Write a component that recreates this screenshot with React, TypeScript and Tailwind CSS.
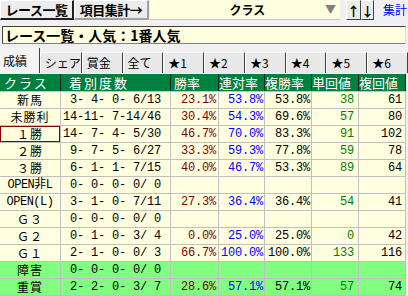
import React from 'react';

type Row = {
  cls: string;
  count: string;
  win: string;
  ren: string;
  fuku: string;
  tan: string;
  fukuRet: string;
  green?: boolean;
  selected?: boolean;
};

const rows: Row[] = [
  { cls: '新馬', count: ' 3- 4- 0- 6/13', win: '23.1%', ren: '53.8%', fuku: '53.8%', tan: '38', fukuRet: '61' },
  { cls: '未勝利', count: '14-11- 7-14/46', win: '30.4%', ren: '54.3%', fuku: '69.6%', tan: '57', fukuRet: '80' },
  { cls: '１勝', count: '14- 7- 4- 5/30', win: '46.7%', ren: '70.0%', fuku: '83.3%', tan: '91', fukuRet: '102', selected: true },
  { cls: '２勝', count: ' 9- 7- 5- 6/27', win: '33.3%', ren: '59.3%', fuku: '77.8%', tan: '59', fukuRet: '78' },
  { cls: '３勝', count: ' 6- 1- 1- 7/15', win: '40.0%', ren: '46.7%', fuku: '53.3%', tan: '89', fukuRet: '64' },
  { cls: 'OPEN非L', count: ' 0- 0- 0- 0/ 0', win: '', ren: '', fuku: '', tan: '', fukuRet: '' },
  { cls: 'OPEN(L)', count: ' 3- 1- 0- 7/11', win: '27.3%', ren: '36.4%', fuku: '36.4%', tan: '54', fukuRet: '41' },
  { cls: 'Ｇ３', count: ' 0- 0- 0- 0/ 0', win: '', ren: '', fuku: '', tan: '', fukuRet: '' },
  { cls: 'Ｇ２', count: ' 0- 1- 0- 3/ 4', win: '0.0%', ren: '25.0%', fuku: '25.0%', tan: '0', fukuRet: '42' },
  { cls: 'Ｇ１', count: ' 2- 1- 0- 0/ 3', win: '66.7%', ren: '100.0%', fuku: '100.0%', tan: '133', fukuRet: '116' },
  { cls: '障害', count: ' 0- 0- 0- 0/ 0', win: '', ren: '', fuku: '', tan: '', fukuRet: '', green: true },
  { cls: '重賞', count: ' 2- 2- 0- 3/ 7', win: '28.6%', ren: '57.1%', fuku: '57.1%', tan: '57', fukuRet: '74', green: true },
];

const tabs = ['成績', 'シェア', '賞金', '全て', '★1', '★2', '★3', '★4', '★5', '★6'];

const cols = 'grid grid-cols-[60px_109px_47px_45px_46px_46px_46px] gap-x-px';
const mono = "font-['Liberation_Mono','Noto_Sans_CJK_JP',monospace]";

function App() {
  return (
    <div className="w-[408px] h-[296px] overflow-hidden bg-[#f0f0f0] text-black font-['Noto_Sans_CJK_JP',sans-serif]">
      {/* top bar */}
      <div className="flex h-[20px]">
        <div className="w-[74px] flex items-center justify-center text-[13px] font-bold leading-none tracking-[-0.5px] bg-[#ececec] border-t border-l border-white border-r-2 border-b-2 border-r-[#202020] border-b-[#202020]">
          レース一覧
        </div>
        <div className="w-[75px] flex items-center justify-center text-[13px] font-bold leading-none tracking-[-0.5px] bg-[#ececec] border-t border-l border-white border-r-2 border-b-2 border-r-[#a0a0a0] border-b-[#a0a0a0]">
          項目集計→
        </div>
        <div className="ml-[1px] w-[190px] flex items-center bg-[#ffffe0] border-b border-[#c8c8c8]">
          <span className="flex-1 text-center text-[12px] font-bold leading-none pl-[20px]">クラス</span>
          <span className="text-[#808080] text-[11px] leading-none pr-[4px]">▼</span>
        </div>
        <div className="ml-[6px] w-[15px] flex items-center justify-center text-[13px] font-bold leading-none bg-[#ececec] border border-r-[#404040] border-b-[#404040] border-t-white border-l-white">
          ↑
        </div>
        <div className="w-[13px] flex items-center justify-center text-[13px] font-bold leading-none bg-[#ececec] border border-r-[#404040] border-b-[#404040] border-t-white border-l-white">
          ↓
        </div>
        <div className="ml-[9px] flex items-center text-[12px] text-[#0000ff] leading-none">集計</div>
      </div>

      {/* title */}
      <div className="mt-[6px] mx-[2px] h-[18px] flex items-center bg-[#ffffe0] border border-t-[#404040] border-l-[#404040] border-b-[#808080] border-r-[#e0e0e0] pl-[2px] text-[14px] font-bold leading-none">
        レース一覧・人気：1番人気
      </div>

      {/* tabs */}
      <div className="mt-[3px] h-[26px] flex items-end">
        {tabs.map((t, i) => (
          <div
            key={t}
            className={
              i === 0
                ? 'w-[41px] h-[25px] flex items-center pl-[3px] text-[12px] leading-none whitespace-nowrap bg-[#f4f4f4] border-r border-r-[#404040]'
                : 'w-[42px] h-[21px] flex items-center pl-[4px] text-[12px] leading-none whitespace-nowrap bg-[#e8e8e8] border-l border-t border-white border-r border-r-[#404040]'
            }
          >
            {t}
          </div>
        ))}
      </div>

      {/* table */}
      <div className="mt-[1px] w-[406px] bg-[#c0c0c0] flex flex-col gap-y-px pb-px">
        <div className={`${cols} h-[17px] bg-[#202020] text-white text-[13px] leading-none`}>
          <div className="bg-[#008040] flex items-center pl-[4px] tracking-[2px]">クラス</div>
          <div className="bg-[#008040] flex items-center pl-[8px] tracking-[2px]">着別度数</div>
          <div className="bg-[#008040] flex items-center pl-[3px]">勝率</div>
          <div className="bg-[#008040] flex items-center">連対率</div>
          <div className="bg-[#008040] flex items-center">複勝率</div>
          <div className="bg-[#008040] flex items-center">単回値</div>
          <div className="bg-[#008040] flex items-center">複回値</div>
        </div>
        {rows.map((r) => {
          const bg = r.green ? 'bg-[#80ff80]' : 'bg-[#ffffe0]';
          return (
            <div key={r.cls} className={`${cols} h-[16px] text-[12px] leading-[14px]`}>
              <div
                className={`${bg} flex items-center justify-center leading-none ${
                  r.selected ? 'border border-[#800000]' : ''
                } ${/^[A-Z]/.test(r.cls) ? `${mono} tracking-[-0.5px]` : 'tracking-[1px]'}`}
              >
                {r.cls}
              </div>
              <div className={`${bg} ${mono} flex items-center pl-[2px] whitespace-pre tracking-[-0.2px]`}>{r.count}</div>
              <div className={`${bg} ${mono} flex items-center justify-end pr-[2px] text-[#800000] tracking-[-0.2px]`}>{r.win}</div>
              <div className={`${bg} ${mono} flex items-center justify-end pr-[1px] text-[#0000ff] tracking-[-0.2px]`}>{r.ren}</div>
              <div className={`${bg} ${mono} flex items-center justify-end pr-[1px] tracking-[-0.2px]`}>{r.fuku}</div>
              <div className={`${bg} ${mono} flex items-center justify-end pr-[4px] text-[#008000] tracking-[-0.2px]`}>{r.tan}</div>
              <div className={`${bg} ${mono} flex items-center justify-end pr-[3px] tracking-[-0.2px]`}>{r.fukuRet}</div>
            </div>
          );
        })}
      </div>
    </div>
  );
}

export default App;
